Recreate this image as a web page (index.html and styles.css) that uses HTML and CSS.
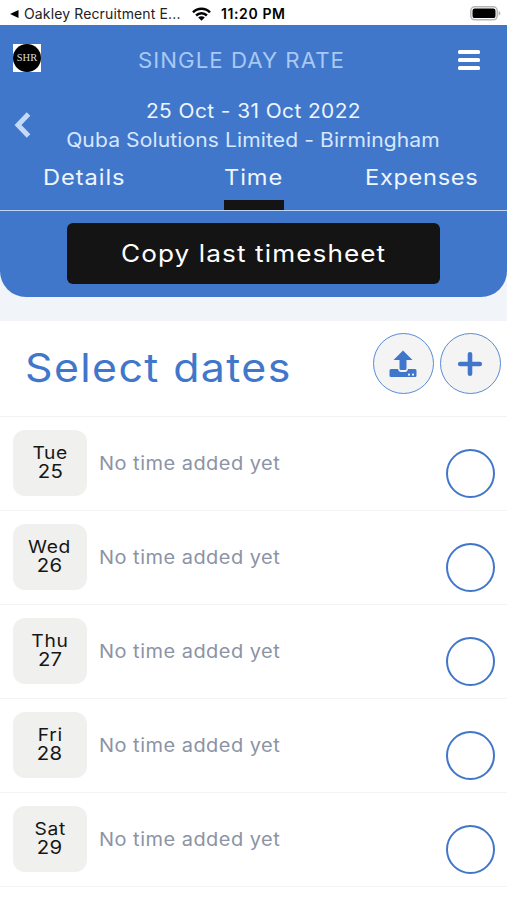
FILE: index.html
```html
<!DOCTYPE html>
<html lang="en">
<head>
<meta charset="utf-8">
<title>Timesheet</title>
<link rel="stylesheet" href="styles.css">
</head>
<body>
<div class="status">
  <svg class="back-app" viewBox="0 0 10 9"><path d="M0 4.5 9.5 0v9z"/></svg>
  <span class="app-name">Oakley Recruitment E...</span>
  <svg class="wifi" viewBox="0 0 19 14"><g fill="none" stroke="#000" stroke-width="2.5"><path d="M1 5.3a12 12 0 0 1 17 0M4.1 8.5a7.7 7.7 0 0 1 10.8 0"/></g><path d="M6.2 10.5a4.7 4.7 0 0 1 6.6 0L9.500 13.800z"/></svg>
  <span class="clock">11:20 PM</span>
  <svg class="battery" viewBox="0 0 31 15"><rect x=".8" y=".8" width="26.400" height="13" rx="4" fill="#fff" stroke="#b5b5b5" stroke-width="1.500"/><rect x="2.500" y="2.500" width="23" height="9.600" rx="2.200"/><path d="M28.600 4.800q1.800.8 1.800 2.500t-1.800 2.500z" fill="#b5b5b5"/></svg>
</div>
<header class="header">
  <div class="topbar">
    <div class="logo"><span>SHR</span></div>
    <div class="title">SINGLE DAY RATE</div>
    <div class="menu"><i></i><i></i><i></i></div>
  </div>
  <div class="period">
    <svg class="chevron" viewBox="0 0 18 28"><path d="M14.500 3 4 14l10.500 11" fill="none" stroke="currentColor" stroke-width="5"/></svg>
    <div class="period-text">
      <div class="range">25 Oct - 31 Oct 2022</div>
      <div class="client">Quba Solutions Limited - Birmingham</div>
    </div>
  </div>
  <nav class="tabs">
    <a class="details"><span>Details</span></a>
    <a class="time active"><span>Time</span></a>
    <a class="expenses"><span>Expenses</span></a>
  </nav>
  <button class="copy"><span>Copy last timesheet</span></button>
</header>
<main class="panel">
  <div class="panel-head">
    <h1>Select dates</h1>
    <div class="round"><svg viewBox="0 0 28 28"><path d="M14 .5 23.500 10h-6v8.500q0 1.500-1.500 1.500h-4q-1.500 0-1.500-1.500V10h-6zM2 19h7q.6 3 3 3h4q2.400 0 3-3h7q1.500 0 1.500 1.500v5q0 1.500-1.500 1.500H2q-1.500 0-1.500-1.500v-5Q.5 19 2 19z"/><g fill="#f4f4f4"><circle cx="20" cy="24.700" r="1.100"/><circle cx="24" cy="24.700" r="1.100"/></g></svg></div>
    <div class="round"><svg viewBox="0 0 28 28"><path d="M14 4.200v19.600M4.200 14h19.600" fill="none" stroke="currentColor" stroke-width="4.600" stroke-linecap="round"/></svg></div>
  </div>
  <div class="row"><div class="day"><span>Tue</span><b>25</b></div><span class="note">No time added yet</span><div class="pick"></div></div>
  <div class="row"><div class="day"><span>Wed</span><b>26</b></div><span class="note">No time added yet</span><div class="pick"></div></div>
  <div class="row"><div class="day"><span>Thu</span><b>27</b></div><span class="note">No time added yet</span><div class="pick"></div></div>
  <div class="row"><div class="day"><span>Fri</span><b>28</b></div><span class="note">No time added yet</span><div class="pick"></div></div>
  <div class="row"><div class="day"><span>Sat</span><b>29</b></div><span class="note">No time added yet</span><div class="pick"></div></div>
</main>
</body>
</html>
```
FILE: styles.css
```css
* { box-sizing: border-box; }
html, body { height: 100%; }
body {
  margin: 0;
  overflow: hidden;
  background: #f1f4f8;
  font-family: Inter, "Liberation Sans", sans-serif;
  white-space: nowrap;
  display: flex;
  flex-direction: column;
}
svg { display: block; flex: none; fill: currentColor; }

.status { height: 25px; flex: none; background: #fff; color: #000; display: flex; align-items: center; padding: 2px 7px 0 10px; }
.back-app { width: 9px; height: 8px; }
.app-name { font-size: 14px; margin-left: 5px; width: 168px; letter-spacing: .13px; color: #222; }
.wifi { width: 19px; height: 14px; }
.clock { font-size: 14px; font-weight: 600; margin-left: 10px; letter-spacing: .6px; }
.battery { width: 31px; height: 15px; margin-left: auto; margin-right: -1px; }

.header { height: 271.5px; flex: none; background: #4077cb; border-radius: 0 0 26px 26px; color: #eef5ff; display: flex; flex-direction: column; }
.topbar { height: 70px; display: flex; align-items: center; padding: 0 27px 0 13px; }
.logo { width: 28px; height: 28px; background: #fff; margin-top: -4px; display: flex; }
.logo span { width: 28px; height: 28px; border-radius: 50%; background: #000; color: #ddd; font: 10.500px/28px "Liberation Serif", serif; text-align: center; }
.title { font-size: 21px; letter-spacing: .95px; color: #a9c8f3; margin-left: 97px; transform: scaleX(1.06); transform-origin: left; }
.menu { margin-left: auto; width: 22px; display: flex; flex-direction: column; gap: 4px; }
.menu i { height: 3.700px; border-radius: 1.500px; background: #fff; }
.period { height: 60px; display: flex; align-items: center; padding: 0 0 0 14px; }
.chevron { width: 18px; height: 28px; color: #c5dafa; margin-top: -1px; }
.period-text { flex: 1; padding-right: 32px; display: flex; flex-direction: column; align-items: center; }
.range { font-size: 19.500px; line-height: 30px; letter-spacing: .4px; transform: scaleX(1.07); }
.client { font-size: 19.500px; line-height: 29px; letter-spacing: .1px; color: #d8e7fd; transform: scaleX(1.08); }
.tabs { height: 56px; border-bottom: 1.500px solid #c0d5f3; display: flex; padding-left: 43px; font-size: 21.500px; letter-spacing: .85px; }
.tabs a { height: 54.500px; line-height: 44px; }
.tabs span { display: inline-block; transform: scaleX(1.1); transform-origin: left; }
.details { width: 84px; }
.time { width: 60px; margin-left: 97px; }
.expenses { width: 113px; margin-left: 81px; letter-spacing: .6px; }
.tabs .active { border-bottom: 10px solid #141414; }
.copy { width: 373px; height: 61px; margin: 12px 0 0 67px; border: 0; border-radius: 6px; background: #141414; color: #fff; font: 24px Inter, sans-serif; letter-spacing: 1px; padding: 0; }
.copy span { display: inline-block; transform: scaleX(1.09); }

.panel { margin-top: 24.500px; flex: 1; background: #fff; }
.panel-head { height: 96px; border-bottom: 1px solid #f2f2f2; display: flex; padding: 12px 6.500px 0 25px; gap: 6px; color: #4077cb; }
h1 { margin: 0 auto 0 0; font-size: 39px; font-weight: 400; line-height: 70px; letter-spacing: 1.250px; transform: scaleX(1.1); transform-origin: left; }
.round { width: 61px; height: 61px; border: 1.500px solid #5b8bd4; border-radius: 50%; background: #f4f4f4; display: flex; align-items: center; justify-content: center; }
.round svg { width: 28px; height: 28px; }
.row { height: 94px; border-bottom: 1px solid #f4f4f4; display: flex; padding: 13px 12.500px 0 13px; }
.day { width: 74px; height: 66px; border-radius: 12px; background: #f0f0ee; color: #161616; display: flex; flex-direction: column; align-items: center; padding-top: 14px; font-size: 17.500px; line-height: 18px; letter-spacing: .6px; }
.day span, .day b { transform: scaleX(1.1); }
.day b { font-weight: 400; font-size: 18.500px; letter-spacing: .2px; }
.note { margin-left: 12px; font-size: 18.500px; line-height: 66px; letter-spacing: .45px; color: #8c93a5; transform: scaleX(1.08); transform-origin: left; }
.pick { margin: 19px 0 0 auto; width: 49px; height: 49px; border: 2.500px solid #4077cb; border-radius: 50%; }
```
